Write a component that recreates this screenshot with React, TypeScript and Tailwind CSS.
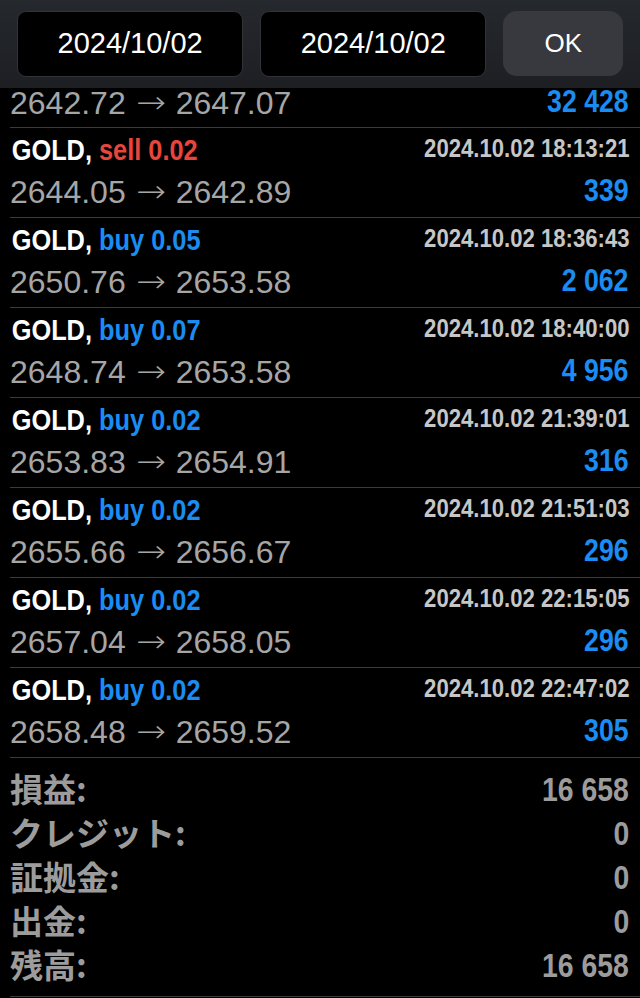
const sans = '"Liberation Sans", Arial, sans-serif';
const cjk = '"Noto Sans CJK JP", "Liberation Sans", sans-serif';

type Deal = {
  side: 'buy' | 'sell';
  lots: string;
  time: string;
  from: string;
  to: string;
  profit: string;
};

const deals: Deal[] = [
  { side: 'sell', lots: '0.02', time: '2024.10.02 18:13:21', from: '2644.05', to: '2642.89', profit: '339' },
  { side: 'buy', lots: '0.05', time: '2024.10.02 18:36:43', from: '2650.76', to: '2653.58', profit: '2 062' },
  { side: 'buy', lots: '0.07', time: '2024.10.02 18:40:00', from: '2648.74', to: '2653.58', profit: '4 956' },
  { side: 'buy', lots: '0.02', time: '2024.10.02 21:39:01', from: '2653.83', to: '2654.91', profit: '316' },
  { side: 'buy', lots: '0.02', time: '2024.10.02 21:51:03', from: '2655.66', to: '2656.67', profit: '296' },
  { side: 'buy', lots: '0.02', time: '2024.10.02 22:15:05', from: '2657.04', to: '2658.05', profit: '296' },
  { side: 'buy', lots: '0.02', time: '2024.10.02 22:47:02', from: '2658.48', to: '2659.52', profit: '305' },
];

const summary = [
  { label: '損益:', value: '16 658' },
  { label: 'クレジット:', value: '0' },
  { label: '証拠金:', value: '0' },
  { label: '出金:', value: '0' },
  { label: '残高:', value: '16 658' },
];

const PriceLine = ({ from, to, profit, className }: { from: string; to: string; profit: string; className: string }) => (
  <div className={`flex items-center justify-between ${className}`} style={{ fontFamily: sans }}>
    <span className="text-[32px] text-[#a6a6a6] whitespace-nowrap flex items-center">
      {from}
      <span
        className="inline-block text-[31px] font-light px-[12px] scale-x-[1.15]"
        style={{ fontFamily: '"DejaVu Sans", sans-serif' }}
      >
        →
      </span>
      {to}
    </span>
    <span className="inline-block text-[31px] font-bold text-[#1a8cf2] pr-[13px] origin-right scale-x-[0.86] whitespace-nowrap">
      {profit}
    </span>
  </div>
);

const DealRow = ({ d }: { d: Deal }) => (
  <div className="border-t border-[#3a3a3c]">
    <div className="flex items-center justify-between h-[44px] pb-[2px]" style={{ fontFamily: sans }}>
      <span className="inline-block text-[30px] font-bold origin-left scale-x-[0.845] whitespace-nowrap pl-[2px]">
        <span className="text-white">GOLD, </span>
        <span className={d.side === 'sell' ? 'text-[#e8453c]' : 'text-[#1a8cf2]'}>
          {d.side} {d.lots}
        </span>
      </span>
      <span className="inline-block text-[25px] font-bold text-[#c6c6c6] pr-[12px] origin-right scale-x-[0.885] whitespace-nowrap">
        {d.time}
      </span>
    </div>
    <PriceLine from={d.from} to={d.to} profit={d.profit} className="h-[45px] pb-[6px]" />
  </div>
);

export default function App() {
  return (
    <div className="w-[640px] h-[998px] bg-black overflow-hidden text-white">
      <div
        className="h-[88px] bg-gradient-to-b from-[#25282d] to-[#1d1f23] flex items-center gap-[17px] px-[17px] pb-[1px]"
        style={{ fontFamily: sans }}
      >
        <div className="w-[227px] h-[66px] bg-black border border-[#303338] rounded-[9px] flex items-center justify-center text-[29px] text-white">
          2024/10/02
        </div>
        <div className="w-[227px] h-[66px] bg-black border border-[#303338] rounded-[9px] flex items-center justify-center text-[29px] text-white">
          2024/10/02
        </div>
        <div className="w-[120px] h-[65px] bg-[#37393e] rounded-[14px] flex items-center justify-center text-[26px] text-white">
          OK
        </div>
      </div>

      <div className="pl-[10px]">
        <PriceLine from="2642.72" to="2647.07" profit="32 428" className="h-[39px] pb-[10px]" />
        {deals.map((d, i) => (
          <DealRow key={i} d={d} />
        ))}
        <div className="border-t border-b border-[#3a3a3c] pt-[10px] pb-[8px]">
          {summary.map((s) => (
            <div key={s.label} className="flex items-center justify-between h-[44px]">
              <span className="text-[33px] font-bold text-[#9c9c9c] pb-[3px] leading-none" style={{ fontFamily: cjk }}>
                {s.label}
              </span>
              <span
                className="inline-block text-[33px] font-bold text-[#9c9c9c] pr-[13px] origin-right scale-x-[0.86] whitespace-nowrap"
                style={{ fontFamily: sans }}
              >
                {s.value}
              </span>
            </div>
          ))}
        </div>
      </div>
    </div>
  );
}
